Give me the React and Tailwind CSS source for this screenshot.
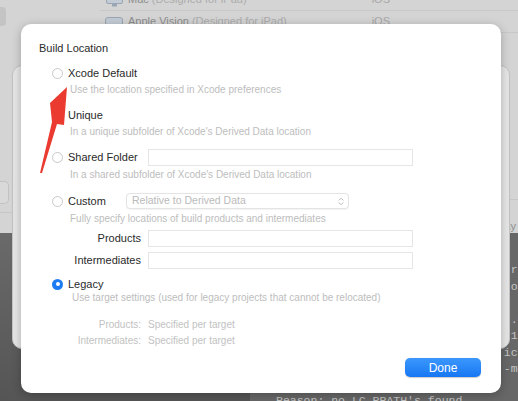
import React from 'react';

const font = { fontFamily: '"Liberation Sans", Arial, sans-serif' };

const Radio = ({ checked }) =>
  checked ? (
    <span className="w-[11px] h-[11px] rounded-full bg-[#1d7cf2] flex items-center justify-center shrink-0">
      <span className="w-[4px] h-[4px] rounded-full bg-white" />
    </span>
  ) : (
    <span className="w-[11px] h-[11px] rounded-full border border-[#c8c8c8] bg-white shrink-0" />
  );

const Field = () => <div className="w-[265px] h-[17px] border border-[#e6e6e6] bg-white" />;

const Desc = ({ children, className = '' }) => (
  <div className={`h-[12px] flex items-center text-[10px] text-[#bdbdbd] ${className}`}>{children}</div>
);

// only the right end of each terminal line peeks out past the sheets
const termLines = [
  { col: 34, text: 'rpath' },
  { col: 34, text: 'ot' },
  { col: 34, text: '' },
  { col: 34, text: '.d' },
  { col: 34, text: '1.' },
  { col: 33, text: 'ic' },
  { col: 33, text: '-mo' },
];

const MacIcon = () => (
  <svg width="17" height="14" viewBox="0 0 17 14">
    <rect x="0.5" y="0.5" width="16" height="10" rx="1.5" fill="#c3ccd6" stroke="#9aa6b3" />
    <rect x="6" y="11" width="5" height="2.5" fill="#9aa6b3" />
  </svg>
);

const VisionIcon = () => (
  <svg width="18" height="10" viewBox="0 0 18 10">
    <path d="M3 0.5h12a2.5 2.5 0 0 1 2.5 2.5v3a3 3 0 0 1-3 3h-3l-2.5-2-2.5 2h-3a3 3 0 0 1-3-3v-3a2.5 2.5 0 0 1 2.5-2.5z" fill="#c3ccd6" stroke="#9aa6b3" />
  </svg>
);

export default function App() {
  return (
    <div className="relative w-[518px] h-[401px] overflow-hidden bg-[#d4d4d4]" style={font}>
      {/* background window */}
      <div className="flex flex-col h-full">
        <div className="h-[240px] flex bg-[#d4d4d4]">
          <div className="w-[100px] shrink-0 flex flex-col">
            <div className="mt-[7px] w-[6px] h-[19px] rounded-r-[4px] bg-[#c4c4c4]" />
            <div className="mt-[155px] w-[9px] h-[23px] rounded-r-[5px] border border-[#c2c2c2] border-l-0 bg-[#d9d9d9]" />
            <div className="mt-[8px] border-t border-[#c6c6c6]" />
          </div>
          <div className="flex-1 min-w-0 flex flex-col -mt-[11px]">
            <div className="h-[22px] border-b border-[#c8c8c8] flex items-center text-[11px]">
              <span className="ml-[6px] w-[22px]"><MacIcon /></span>
              <span className="text-[#8e8e8e]">Mac</span>
              <span className="ml-[3px] text-[#acacac]">(Designed for iPad)</span>
              <span className="ml-auto mr-[128px] text-[#a8a8a8]">iOS</span>
            </div>
            <div className="h-[22px] border-b border-[#c8c8c8] flex items-center text-[11px]">
              <span className="ml-[5px] w-[23px]"><VisionIcon /></span>
              <span className="text-[#8e8e8e]">Apple Vision</span>
              <span className="ml-[3px] text-[#acacac]">(Designed for iPad)</span>
              <span className="ml-auto mr-[128px] text-[#a8a8a8]">iOS</span>
            </div>
            <div className="mt-[166px] border-t border-[#c6c6c6]" />
            <div className="mt-[19px] h-[14px] flex items-center text-[11px] text-[#8e8e8e] pl-[380px]">Display</div>
          </div>
        </div>
        <div className="flex-1 flex">
          <div className="w-[250px] shrink-0 bg-gradient-to-b from-[#6a6a6a] to-[#545454]" />
          <div
            className="flex-1 min-w-0 overflow-hidden bg-[#676767] pt-[29px] pl-[26px] text-[11.5px] text-[#c4c4c4] whitespace-pre"
            style={{ fontFamily: '"Liberation Mono", "Courier New", monospace' }}
          >
            {termLines.map((l, i) => (
              <div key={i} className="h-[16.5px] leading-[16.5px]">
                {' '.repeat(l.col) + l.text}
              </div>
            ))}
            <div className="mt-[15px] h-[16.5px] leading-[16.5px]">Reason: no LC_RPATH's found</div>
          </div>
        </div>
      </div>

      {/* sheet behind */}
      <div className="absolute left-[12px] top-[65px] w-[498px] h-[284px] rounded-[10px] bg-[#e6e6e6] border border-[#c2c2c2]" />

      {/* dialog */}
      <div className="absolute left-[21px] top-[24px] w-[480px] h-[369px] rounded-[10px] bg-white shadow-[0_2px_10px_rgba(0,0,0,0.25)] flex flex-col pt-[17px] text-[11px] text-[#2a2a2a]">
        <div className="pl-[18px] h-[14px] flex items-center">Build Location</div>

        <div className="mt-[11px] pl-[31px] h-[14px] flex items-center gap-[5px]">
          <Radio />
          <span>Xcode Default</span>
        </div>
        <Desc className="mt-[3px] pl-[49px]">Use the location specified in Xcode preferences</Desc>

        <div className="mt-[13px] pl-[31px] h-[14px] flex items-center gap-[5px]">
          <Radio />
          <span>Unique</span>
        </div>
        <Desc className="mt-[3px] pl-[49px]">In a unique subfolder of Xcode's Derived Data location</Desc>

        <div className="mt-[12px] pl-[31px] h-[17px] flex items-center gap-[5px]">
          <Radio />
          <span className="w-[75px]">Shared Folder</span>
          <Field />
        </div>
        <Desc className="mt-[2px] pl-[49px]">In a shared subfolder of Xcode's Derived Data location</Desc>

        <div className="mt-[13px] pl-[31px] h-[16px] flex items-center gap-[5px]">
          <Radio />
          <span className="w-[53px]">Custom</span>
          <div className="w-[223px] h-[16px] rounded-[4px] border border-[#e4e4e4] bg-white flex items-center pl-[5px] pr-[4px] text-[10.5px] text-[#bababa] shadow-[0_0.5px_1px_rgba(0,0,0,0.05)]">
            <span className="flex-1">Relative to Derived Data</span>
            <svg width="6" height="9" viewBox="0 0 6 9" fill="none" stroke="#b8b8b8" strokeWidth="1" strokeLinecap="round" strokeLinejoin="round">
              <path d="M1 3.2 3 1.2 5 3.2" />
              <path d="M1 5.8 3 7.8 5 5.8" />
            </svg>
          </div>
        </div>
        <Desc className="mt-[3px] pl-[49px]">Fully specify locations of build products and intermediates</Desc>

        <div className="mt-[6px] h-[17px] flex items-center">
          <span className="w-[120px] text-right">Products</span>
          <span className="ml-[7px]"><Field /></span>
        </div>
        <div className="mt-[5px] h-[17px] flex items-center">
          <span className="w-[120px] text-right">Intermediates</span>
          <span className="ml-[7px]"><Field /></span>
        </div>

        <div className="mt-[8px] pl-[31px] h-[14px] flex items-center gap-[5px]">
          <Radio checked />
          <span>Legacy</span>
        </div>
        <Desc className="pl-[51px]">Use target settings (used for legacy projects that cannot be relocated)</Desc>

        <div className="mt-[15px] h-[13px] flex items-center text-[10px] text-[#c2c2c2]">
          <span className="w-[120px] text-right">Products:</span>
          <span className="ml-[7px]">Specified per target</span>
        </div>
        <div className="mt-[3px] h-[13px] flex items-center text-[10px] text-[#c2c2c2]">
          <span className="w-[120px] text-right">Intermediates:</span>
          <span className="ml-[7px]">Specified per target</span>
        </div>

        <div className="mt-[11px] flex justify-end pr-[20px]">
          <button className="w-[76px] h-[19px] rounded-[5px] bg-gradient-to-b from-[#3b97fd] to-[#1677f3] text-white text-[12px] flex items-center justify-center shadow-[0_0.5px_1px_rgba(0,0,0,0.2)]">
            Done
          </button>
        </div>
      </div>

      {/* annotation arrow */}
      <svg className="absolute left-0 top-0 pointer-events-none" width="518" height="401">
        <polygon points="67,87 64,125 57,124 42,173 40,173 52,122 50,103" fill="#eb3b30" />
      </svg>
    </div>
  );
}
